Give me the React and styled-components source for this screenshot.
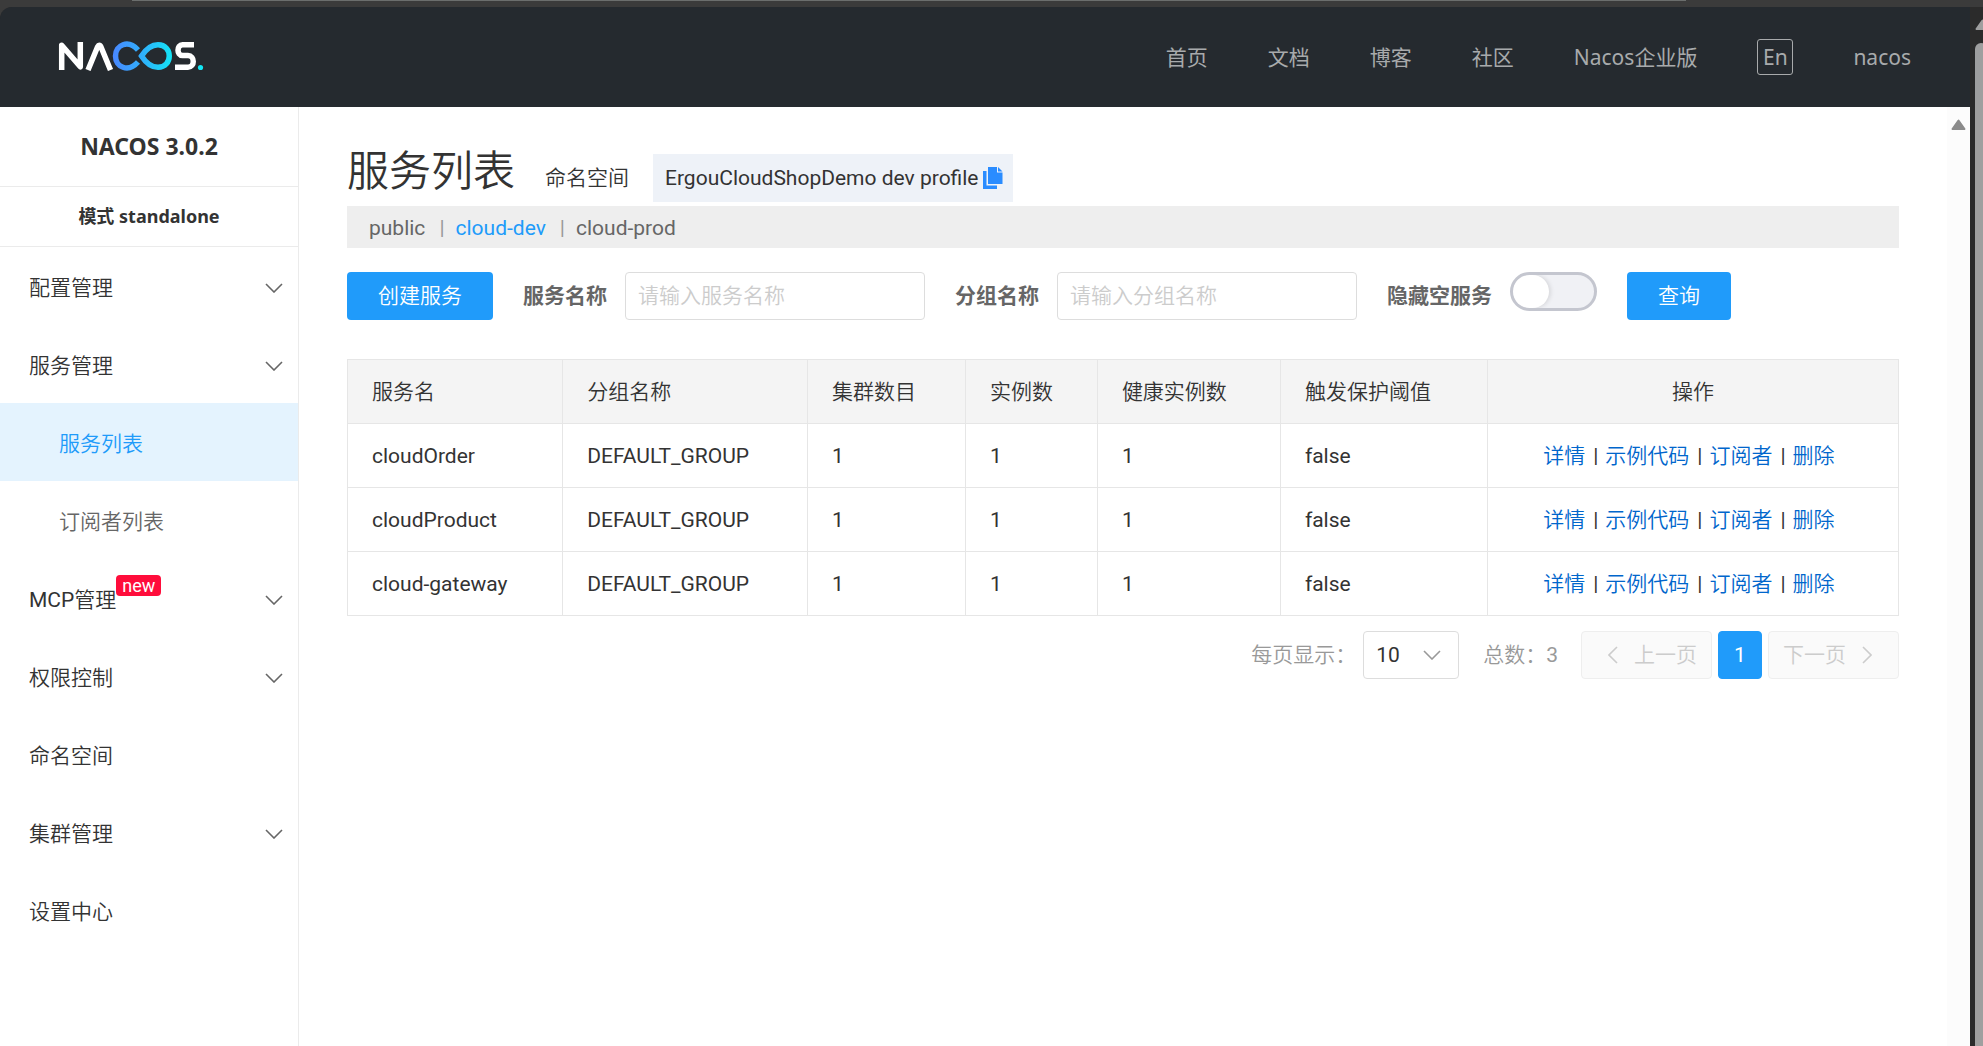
import React from 'react';
import styled, { createGlobalStyle, css } from 'styled-components';

const latin = 'Roboto, "Noto Sans CJK SC", sans-serif';
const humanist = '"Noto Sans", "Noto Sans CJK SC", sans-serif';
const thin = 350;

const GlobalStyle = createGlobalStyle`
  *, *::before, *::after { box-sizing: border-box; }
  html, body, #root { height: 100%; }
  body {
    margin: 0;
    overflow: hidden;
    background: #3b3b3b;
    color: #333;
    font: 400 21px/32px ${latin};
  }
  button, input, select { font: inherit; }
  a { text-decoration: none; color: inherit; }
`;

const Window = styled.div`
  height: 100%;
  display: flex;
  flex-direction: column;
`;

const TopEdge = styled.div`
  flex: none;
  height: 7px;
  padding: 0 297px 0 132px;
  background: #3b3b3b;
  &::before {
    content: '';
    display: block;
    height: 1px;
    background: #6b6e6d;
  }
`;

const Frame = styled.div`
  flex: 1;
  min-height: 0;
  display: flex;
  background: #2b2b2b;
  border-top-left-radius: 12px;
  overflow: hidden;
`;

const Page = styled.div`
  flex: 1;
  min-width: 0;
  display: flex;
  flex-direction: column;
`;

const OuterScroll = styled.div`
  flex: none;
  width: 13px;
  padding: 12px 0 0 5px;
  overflow: hidden;
  display: flex;
  flex-direction: column;
  gap: 12px;
  svg { display: block; flex: none; }
  &::after {
    content: '';
    flex: 1;
    width: 12px;
    border-radius: 6px 6px 0 0;
    background: #9f9f9f;
  }
`;

const Header = styled.header`
  flex: none;
  height: 100px;
  display: flex;
  align-items: center;
  justify-content: space-between;
  padding: 0 59px 0 58px;
  background: #252a2f;
`;

const LogoLink = styled.a`
  display: flex;
  padding-bottom: 3px;
  svg { display: block; }
`;

const Nav = styled.nav`
  display: flex;
  align-items: center;
  gap: 60px;
  color: #a8aaac;
  font-family: ${humanist};
`;

const LangButton = styled.button`
  width: 36px;
  height: 36px;
  padding: 0;
  border: 1px solid #a8aaac;
  border-radius: 3px;
  background: none;
  color: inherit;
  line-height: 32px;
`;

const Body = styled.div`
  flex: 1;
  min-height: 0;
  display: flex;
  background: #fff;
`;

const Sidebar = styled.aside`
  flex: none;
  width: 299px;
  border-right: 1px solid #ebebeb;
`;

const Version = styled.h1`
  margin: 0;
  height: 80px;
  border-bottom: 1px solid #ebebeb;
  text-align: center;
  font: 700 23px/78px ${humanist};
`;

const Mode = styled.p`
  margin: 0;
  height: 60px;
  border-bottom: 1px solid #ebebeb;
  text-align: center;
  font: 700 18px/58px ${humanist};
`;

const Menu = styled.ul`
  margin: 0;
  padding: 0;
  list-style: none;
`;

const MenuLink = styled.a`
  height: 78px;
  display: flex;
  align-items: center;
  justify-content: space-between;
  padding: 3px 15px 0 ${(p) => (p.$nested ? 59 : 29)}px;
  color: ${(p) => (p.$active ? '#209bfa' : p.$nested ? '#666' : '#333')};
  font-weight: ${thin};
  ${(p) => p.$active && css`background: #e4f3fe;`}
`;

const Label = styled.span`
  position: relative;
`;

const Acronym = styled.span`
  font-weight: 400;
`;

const Badge = styled.sup`
  position: absolute;
  left: 100%;
  top: -9px;
  padding: 0 6px;
  border-radius: 4px;
  background: #ff0d3b;
  color: #fff;
  font: 400 18px/21px Roboto, sans-serif;
`;

const Main = styled.main`
  flex: 1;
  min-width: 0;
  padding: 32px 48px 0;
`;

const InnerScroll = styled.div`
  flex: none;
  width: 23px;
  padding: 12px 0 0 4px;
  background: #fcfcfc;
  svg { display: block; }
`;

const TitleRow = styled.div`
  display: flex;
  align-items: flex-start;
`;

const Title = styled.h2`
  margin: 0 30px 0 0;
  font-weight: ${thin};
  font-size: 42px;
  line-height: 66px;
`;

const SpaceLabel = styled.span`
  margin: 23px 24px 0 0;
  font-weight: ${thin};
`;

const SpaceBox = styled.div`
  height: 48px;
  margin: 15px 0 4px;
  padding: 0 10px 0 12px;
  display: flex;
  align-items: center;
  gap: 4px;
  background: #eef2f8;
`;

const IconButton = styled.button`
  padding: 0;
  border: 0;
  background: none;
  display: flex;
`;

const Spaces = styled.nav`
  height: 42px;
  padding: 2px 22px 0;
  display: flex;
  align-items: center;
  background: #eee;
  color: #666;
  a + a::before {
    content: '|';
    margin: 0 11px 0 14px;
    color: #999;
  }
`;

const SpaceLink = styled.a`
  color: ${(p) => (p.$active ? '#209bfa' : '#666')};
`;

const Filters = styled.form`
  display: flex;
  flex-wrap: wrap;
  align-items: flex-start;
  margin: 24px 0 39px;
  column-gap: 30px;
`;

const Primary = styled.button`
  height: 48px;
  padding: 0 31px;
  border: 0;
  border-radius: 4px;
  background: #209bfa;
  color: #fff;
  font-weight: ${thin};
`;

const Field = styled.div`
  display: flex;
  align-items: flex-start;
  gap: 18px;
  color: #666;
  label { font-weight: 700; line-height: 48px; }
`;

const TextInput = styled.input`
  width: 300px;
  height: 48px;
  padding: 0 12px;
  border: 1px solid #ddd;
  border-radius: 4px;
  color: #333;
  font-weight: ${thin};
  &::placeholder { color: #ccc; opacity: 1; }
`;

const Toggle = styled.input`
  appearance: none;
  width: 87px;
  height: 39px;
  margin: 0;
  padding: 0;
  border: 3px solid #c4c6cf;
  border-radius: 20px;
  background: #f0f1f5;
  overflow: hidden;
  &::before {
    content: '';
    display: block;
    width: 36px;
    height: 33px;
    border-radius: 17px;
    background: #fff;
    box-shadow: 2px 0 4px rgba(0, 0, 0, 0.1);
  }
`;

const Table = styled.table`
  width: 100%;
  table-layout: fixed;
  border-collapse: collapse;
  th, td {
    height: 64px;
    padding: 0 24px;
    border: 1px solid #e6e6e6;
    text-align: left;
    white-space: nowrap;
  }
  th { background: #f4f4f4; font-weight: ${thin}; }
  th:last-child { text-align: center; }
  td:last-child { padding-right: 32px; text-align: center; }
`;

const Actions = styled.td`
  a { color: #06c; font-weight: ${thin}; }
  a + a::before {
    content: '|';
    margin: 0 7px 0 8px;
    color: #333;
    font-weight: 400;
  }
`;

const Pager = styled.div`
  display: flex;
  align-items: center;
  justify-content: flex-end;
  margin-top: 15px;
  color: #999;
`;

const PageSize = styled.label`
  display: flex;
  align-items: center;
  gap: 7px;
  font-weight: ${thin};
`;

const SelectWrap = styled.span`
  position: relative;
  svg { position: absolute; right: 18px; top: 19px; pointer-events: none; }
`;

const Select = styled.select`
  appearance: none;
  display: block;
  width: 96px;
  height: 48px;
  padding: 0 12px;
  border: 1px solid #ddd;
  border-radius: 4px;
  background: #fff;
  color: #333;
  font-weight: 400;
`;

const Total = styled.span`
  margin: 0 23px 0 24px;
  font-weight: ${thin};
  b { font-weight: 400; }
`;

const Pages = styled.div`
  display: flex;
  gap: 6px;
`;

const PageButton = styled.button`
  height: 48px;
  min-width: 44px;
  padding: 0 14px;
  display: flex;
  align-items: center;
  justify-content: center;
  gap: 16px;
  border: 1px solid #eee;
  border-radius: 4px;
  background: #fafafa;
  color: #ccc;
  font-weight: ${thin};
  ${(p) => p.$step && css`
    width: 131px;
    justify-content: ${p.$step === 'prev' ? 'flex-end' : 'flex-start'};
  `}
  ${(p) => p.$current && css`
    border-color: #209bfa;
    background: #209bfa;
    color: #fff;
    font-weight: 400;
  `}
`;

const paths = {
  down: { w: 18, h: 10, d: 'M1 1l8 8 8-8' },
  left: { w: 10, h: 18, d: 'M9 1L1 9l8 8' },
  right: { w: 10, h: 18, d: 'M1 1l8 8-8 8' },
};

function Chevron({ dir, color }) {
  const { w, h, d } = paths[dir];
  return (
    <svg width={w} height={h} viewBox={`0 0 ${w} ${h}`} fill="none" stroke={color} strokeWidth="1.6" aria-hidden="true">
      <path d={d} />
    </svg>
  );
}

function UpArrow({ color }) {
  return (
    <svg width="15" height="12" viewBox="0 0 15 12" aria-hidden="true">
      <path d="M7.500 1.500L13.500 10H1.500Z" fill={color} stroke={color} strokeWidth="2" strokeLinejoin="round" />
    </svg>
  );
}

function Logo() {
  return (
    <svg width="146" height="30" viewBox="0 0 146 30" fill="none" aria-hidden="true">
      <defs>
        <linearGradient id="loop" x1="54" y1="0" x2="115" y2="0" gradientUnits="userSpaceOnUse">
          <stop offset="0" stopColor="#4a86ff" />
          <stop offset="0.500" stopColor="#2fb0fb" />
          <stop offset="1" stopColor="#12e6f5" />
        </linearGradient>
      </defs>
      <g stroke="#fff" strokeWidth="5.500" strokeLinejoin="round">
        <path d="M3.700 29V4.200L22.300 25.800V1" />
        <path d="M30 29L39.500 6Q41.300 2.500 43 6L52.500 29" />
        <path d="M136 3.800H124.500C118.500 3.800 118.500 14.600 124.500 14.600H130C137 14.600 137 26.200 130 26.200H117" />
      </g>
      <g stroke="url(#loop)" strokeWidth="5.500">
        <path d="M80 9C70 -2 57.500 4 57.500 15S70 32 80 21" />
        <path d="M83.500 15C88 8 93 3.700 100 3.700C115 3.700 115 26.300 100 26.300C93 26.300 88 22 83.500 15Z" />
      </g>
      <circle cx="142.500" cy="26.500" r="2.600" fill="#12e6f5" />
    </svg>
  );
}

function CopyIcon() {
  return (
    <svg width="20" height="22" viewBox="0 0 20 22" fill="#2a8cff" aria-hidden="true">
      <path d="M5 0h9v5.500h5.500V17H5z" />
      <path d="M15 0l4.500 4.500H15z" />
      <path d="M0 4h3.500v14.500H14V22H0z" />
    </svg>
  );
}

const navLinks = ['首页', '文档', '博客', '社区', 'Nacos企业版'];

const menu = [
  { text: '配置管理', open: true },
  { text: '服务管理', open: true },
  { text: '服务列表', nested: true, active: true },
  { text: '订阅者列表', nested: true },
  { acronym: 'MCP', text: '管理', open: true, badge: 'new' },
  { text: '权限控制', open: true },
  { text: '命名空间' },
  { text: '集群管理', open: true },
  { text: '设置中心' },
];

const columns = [
  ['服务名', '13.88%'],
  ['分组名称', '15.78%'],
  ['集群数目', '10.18%'],
  ['实例数', '8.51%'],
  ['健康实例数', '11.8%'],
  ['触发保护阈值', '13.34%'],
  ['操作', 'auto'],
];

const services = ['cloudOrder', 'cloudProduct', 'cloud-gateway'];
const actions = ['详情', '示例代码', '订阅者', '删除'];

export default function App() {
  return (
    <Window>
      <GlobalStyle />
      <TopEdge />
      <Frame>
        <Page>
          <Header>
            <LogoLink href="#" aria-label="Nacos"><Logo /></LogoLink>
            <Nav>
              {navLinks.map((t) => <a key={t} href="#">{t}</a>)}
              <LangButton type="button">En</LangButton>
              <a href="#">nacos</a>
            </Nav>
          </Header>
          <Body>
            <Sidebar>
              <Version>NACOS 3.0.2</Version>
              <Mode>模式 standalone</Mode>
              <Menu>
                {menu.map((m) => (
                  <li key={m.text}>
                    <MenuLink href="#" $nested={m.nested} $active={m.active}>
                      <Label>
                        {m.acronym && <Acronym>{m.acronym}</Acronym>}
                        {m.text}
                        {m.badge && <Badge>{m.badge}</Badge>}
                      </Label>
                      {m.open && <Chevron dir="down" color="#666" />}
                    </MenuLink>
                  </li>
                ))}
              </Menu>
            </Sidebar>
            <Main>
              <TitleRow>
                <Title>服务列表</Title>
                <SpaceLabel>命名空间</SpaceLabel>
                <SpaceBox>
                  <span>ErgouCloudShopDemo dev profile</span>
                  <IconButton type="button" aria-label="复制"><CopyIcon /></IconButton>
                </SpaceBox>
              </TitleRow>
              <Spaces>
                <SpaceLink href="#">public</SpaceLink>
                <SpaceLink href="#" $active>cloud-dev</SpaceLink>
                <SpaceLink href="#">cloud-prod</SpaceLink>
              </Spaces>
              <Filters onSubmit={(e) => e.preventDefault()}>
                <Primary type="button">创建服务</Primary>
                <Field>
                  <label htmlFor="service">服务名称</label>
                  <TextInput id="service" placeholder="请输入服务名称" />
                </Field>
                <Field>
                  <label htmlFor="group">分组名称</label>
                  <TextInput id="group" placeholder="请输入分组名称" />
                </Field>
                <Field>
                  <label htmlFor="hide">隐藏空服务</label>
                  <Toggle id="hide" type="checkbox" role="switch" />
                </Field>
                <Primary type="submit">查询</Primary>
              </Filters>
              <Table>
                <colgroup>
                  {columns.map(([t, w]) => <col key={t} width={w === 'auto' ? undefined : w} />)}
                </colgroup>
                <thead>
                  <tr>{columns.map(([t]) => <th key={t} scope="col">{t}</th>)}</tr>
                </thead>
                <tbody>
                  {services.map((s) => (
                    <tr key={s}>
                      <td>{s}</td>
                      <td>DEFAULT_GROUP</td>
                      <td>1</td>
                      <td>1</td>
                      <td>1</td>
                      <td>false</td>
                      <Actions>{actions.map((a) => <a key={a} href="#">{a}</a>)}</Actions>
                    </tr>
                  ))}
                </tbody>
              </Table>
              <Pager>
                <PageSize>
                  每页显示：
                  <SelectWrap>
                    <Select defaultValue="10"><option>10</option><option>20</option></Select>
                    <Chevron dir="down" color="#999" />
                  </SelectWrap>
                </PageSize>
                <Total>总数：<b>3</b></Total>
                <Pages>
                  <PageButton type="button" disabled $step="prev"><Chevron dir="left" color="#ccc" />上一页</PageButton>
                  <PageButton type="button" $current>1</PageButton>
                  <PageButton type="button" disabled $step="next">下一页<Chevron dir="right" color="#ccc" /></PageButton>
                </Pages>
              </Pager>
            </Main>
            <InnerScroll><UpArrow color="#8b8b8b" /></InnerScroll>
          </Body>
        </Page>
        <OuterScroll><UpArrow color="#9f9f9f" /></OuterScroll>
      </Frame>
    </Window>
  );
}
